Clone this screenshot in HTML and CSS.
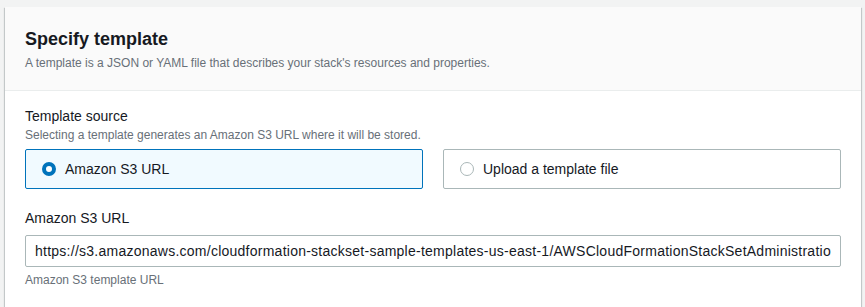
FILE: index.html
```html
<!DOCTYPE html>
<html lang="en">
<head>
  <meta charset="UTF-8">
  <title>Specify template</title>
  <link rel="stylesheet" href="styles.css">
</head>
<body>
  <div class="container">
    <div class="container-header">
      <h2>Specify template</h2>
      <p class="desc">A template is a JSON or YAML file that describes your stack's resources and properties.</p>
    </div>

    <div class="container-body">
      <div class="field">
        <div class="label">Template source</div>
        <div class="desc">Selecting a template generates an Amazon S3 URL where it will be stored.</div>
        <div class="tiles">
          <label class="tile selected">
            <span class="radio checked"></span>
            <span>Amazon S3 URL</span>
          </label>
          <label class="tile">
            <span class="radio"></span>
            <span>Upload a template file</span>
          </label>
        </div>
      </div>

      <div class="field">
        <div class="label">Amazon S3 URL</div>
        <input class="input" type="text" value="https://s3.amazonaws.com/cloudformation-stackset-sample-templates-us-east-1/AWSCloudFormationStackSetAdministrationRole.yml">
        <div class="hint">Amazon S3 template URL</div>
      </div>
    </div>
  </div>
</body>
</html>
```

FILE: styles.css
```css
:root {
  --text: #16191f;
  --muted: #687078;
  --blue: #0073bb;
  --border: #aab7b8;
  --divider: #eaeded;
}

body {
  margin: 0;
  padding: 7px 4px 0 5px;
  background: #f2f3f3;
  font-family: 'Liberation Sans', Arial, sans-serif;
  color: var(--text);
}

.container {
  background: white;
  box-shadow: 0 1px 1px 0 rgba(0,28,36,0.3), 1px 1px 1px 0 rgba(0,28,36,0.15), -1px 1px 1px 0 rgba(0,28,36,0.15);
  height: 300px;
}

.container-header {
  background: #fafafa;
  border-bottom: 1px solid var(--divider);
  padding: 21px 20px 19px;
}

h2 {
  margin: 0 0 5px;
  font-size: 18px;
  line-height: 22px;
  font-weight: bold;
}

.desc {
  margin: 0;
  font-size: 12px;
  line-height: 16px;
  color: var(--muted);
}

.container-body {
  padding: 14px 20px;
}

.field {
  margin-bottom: 18px;
}

.label {
  font-size: 14px;
  line-height: 22px;
}

.tiles {
  display: grid;
  grid-template-columns: 1fr 1fr;
  gap: 20px;
  margin-top: 6px;
}

.tile {
  display: flex;
  align-items: center;
  gap: 9px;
  height: 40px;
  box-sizing: border-box;
  padding-left: 16px;
  border: 1px solid var(--border);
  border-radius: 2px;
  font-size: 14px;
}

.tile.selected {
  background: #f1faff;
  border-color: var(--blue);
}

.radio {
  width: 14px;
  height: 14px;
  box-sizing: border-box;
  border: 1px solid var(--border);
  border-radius: 50%;
  background: white;
}

.radio.checked {
  border: 4px solid var(--blue);
}

.input {
  display: block;
  width: 100%;
  height: 32px;
  box-sizing: border-box;
  margin-top: 6px;
  padding: 0 9px;
  border: 1px solid var(--border);
  border-radius: 2px;
  font-family: inherit;
  font-size: 14px;
  letter-spacing: 0.25px;
  color: var(--text);
  background: white;
}

.hint {
  margin-top: 5px;
  font-size: 12px;
  line-height: 16px;
  color: var(--muted);
}
```
